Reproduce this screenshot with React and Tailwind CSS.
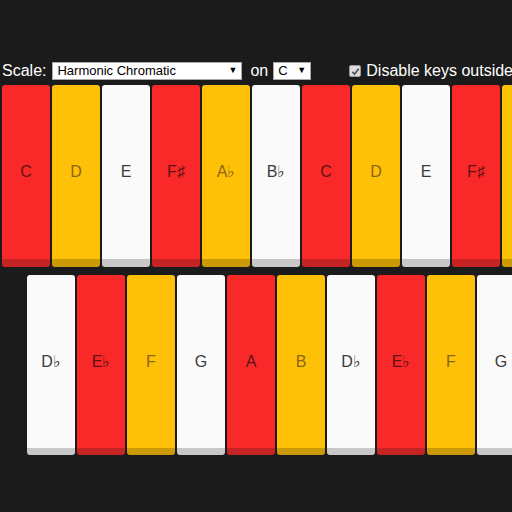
import React from "react";

const keyStyles = {
  red: "bg-[#f9292a] border-[#c62324] text-[#5e1313]",
  yellow: "bg-[#ffc107] border-[#cb9a06] text-[#8a6614]",
  white: "bg-[#fafafa] border-[#c8c8c8] text-[#3a3a3a]",
};

const topRow = [
  ["C", "red"], ["D", "yellow"], ["E", "white"], ["F♯", "red"], ["A♭", "yellow"],
  ["B♭", "white"], ["C", "red"], ["D", "yellow"], ["E", "white"], ["F♯", "red"], ["A♭", "yellow"],
];

const bottomRow = [
  ["D♭", "white"], ["E♭", "red"], ["F", "yellow"], ["G", "white"], ["A", "red"],
  ["B", "yellow"], ["D♭", "white"], ["E♭", "red"], ["F", "yellow"], ["G", "white"],
];

function Key({ label, color, tall }) {
  return (
    <div
      className={`shrink-0 w-[48px] ${tall ? "h-[182px] border-b-[8px]" : "h-[180px] border-b-[7px]"} rounded-[3px] flex items-center justify-center text-[16px] ${keyStyles[color]}`}
    >
      {label}
    </div>
  );
}

function FakeSelect({ value, width }) {
  return (
    <div className={`${width} h-[18px] bg-white border border-[#a9a9a9] flex items-center justify-between pl-[4px] pr-[4px] text-[13px] text-black`}>
      <span>{value}</span>
      <span className="text-[9px]">▼</span>
    </div>
  );
}

export default function App() {
  return (
    <div className="w-[512px] h-[512px] overflow-hidden bg-[#1b1b1b] text-white font-['Liberation_Sans',Arial,sans-serif] whitespace-nowrap">
      <div className="pt-[62px] h-[82px] flex items-start text-[16px] pl-[2px]">
        <div className="flex items-center h-[18px]">
          <span>Scale:</span>
          <div className="ml-[6px]">
            <FakeSelect value="Harmonic Chromatic" width="w-[190px]" />
          </div>
          <span className="ml-[8px]">on</span>
          <div className="ml-[5px]">
            <FakeSelect value="C" width="w-[38px]" />
          </div>
          <span className="ml-[38px] w-[12px] h-[12px] rounded-[2px] bg-[#dcdcdc] border border-[#9a9a9a] flex items-center justify-center">
            <svg width="9" height="9" viewBox="0 0 10 10">
              <path d="M1.5 5.5 L4 8 L8.5 2" fill="none" stroke="#555" strokeWidth="2" />
            </svg>
          </span>
          <span className="ml-[5px]">Disable keys outside scale</span>
        </div>
      </div>
      <div className="mt-[3px] flex gap-[2px] pl-[2px]">
        {topRow.map(([l, c], i) => (
          <Key key={i} label={l} color={c} tall />
        ))}
      </div>
      <div className="mt-[8px] flex gap-[2px] pl-[27px]">
        {bottomRow.map(([l, c], i) => (
          <Key key={i} label={l} color={c} />
        ))}
      </div>
    </div>
  );
}
